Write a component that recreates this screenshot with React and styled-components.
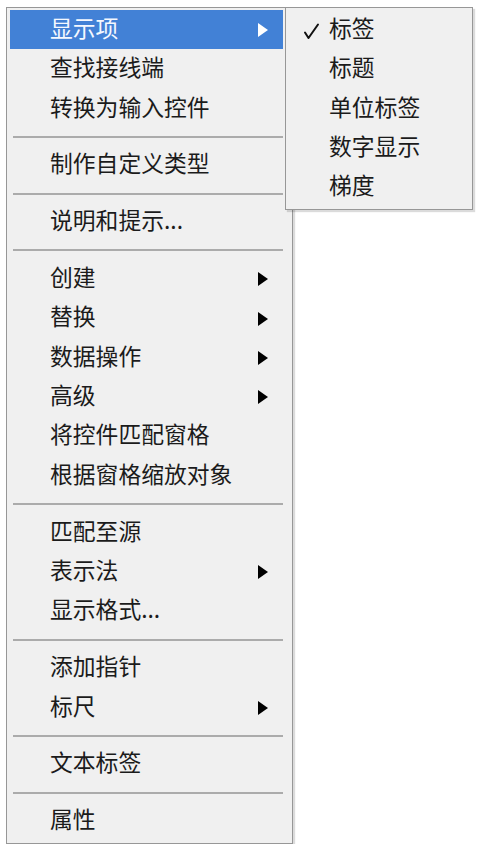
import React from 'react';
import styled, { createGlobalStyle } from 'styled-components';

const GlobalStyle = createGlobalStyle`
  html, body {
    margin: 0;
    padding: 0;
    background: #ffffff;
  }
  body {
    font-family: "Noto Sans CJK SC", "Noto Sans", sans-serif;
  }
`;

const Stage = styled.div`
  position: relative;
  padding: 7px 0 0 6px;
`;

const Menu = styled.div`
  box-sizing: border-box;
  width: ${(p) => p.$width}px;
  background: #f0f0f0;
  border: 1px solid #979797;
  box-shadow: 2px 2px 1px rgba(0, 0, 0, 0.14);
  padding: 2px 9px 2px 3px;
  display: flex;
  flex-direction: column;
`;

const SubMenu = styled(Menu)`
  position: absolute;
  top: 7px;
  left: 285px;
  padding: 2px 4px 2px 3px;
`;

const Item = styled.div`
  height: 39.4px;
  display: flex;
  align-items: center;
  padding: 0 15px 3px 40px;
  box-sizing: border-box;
  position: relative;
  font-size: 22.8px;
  color: ${(p) => (p.$active ? '#f4f8ff' : '#1b1b1b')};
  background: ${(p) => (p.$active ? '#4281d6' : 'transparent')};
  white-space: nowrap;
`;

const Label = styled.span`
  flex: 1;
  line-height: 1;
`;

const Arrow = styled.span`
  width: 0;
  height: 0;
  margin-top: 4px;
  border-top: 7.5px solid transparent;
  border-bottom: 7.5px solid transparent;
  border-left: 10px solid ${(p) => (p.$active ? '#ffffff' : '#000000')};
`;

const Check = styled.svg`
  position: absolute;
  left: 13px;
  top: 12px;
`;

const Separator = styled.div`
  height: 17.4px;
  display: flex;
  align-items: center;
  padding: 0 0 0 3px;

  &::after {
    content: '';
    flex: 1;
    height: 2px;
    background: #ababab;
  }
`;

const mainItems = [
  { label: '显示项', sub: true, active: true },
  { label: '查找接线端' },
  { label: '转换为输入控件' },
  'sep',
  { label: '制作自定义类型' },
  'sep',
  { label: '说明和提示...' },
  'sep',
  { label: '创建', sub: true },
  { label: '替换', sub: true },
  { label: '数据操作', sub: true },
  { label: '高级', sub: true },
  { label: '将控件匹配窗格' },
  { label: '根据窗格缩放对象' },
  'sep',
  { label: '匹配至源' },
  { label: '表示法', sub: true },
  { label: '显示格式...' },
  'sep',
  { label: '添加指针' },
  { label: '标尺', sub: true },
  'sep',
  { label: '文本标签' },
  'sep',
  { label: '属性' },
];

const subItems = [
  { label: '标签', checked: true },
  { label: '标题' },
  { label: '单位标签' },
  { label: '数字显示' },
  { label: '梯度' },
];

const CheckMark = () => (
  <Check width="18" height="18" viewBox="0 0 18 18">
    <path
      d="M3 10.5 L6.5 16 L16 2.5"
      fill="none"
      stroke="#111"
      strokeWidth="2"
      strokeLinecap="round"
      strokeLinejoin="round"
    />
  </Check>
);

export default function App() {
  return (
    <>
      <GlobalStyle />
      <Stage>
        <Menu $width={287}>
          {mainItems.map((it, i) =>
            it === 'sep' ? (
              <Separator key={i} />
            ) : (
              <Item key={i} $active={it.active}>
                <Label>{it.label}</Label>
                {it.sub && <Arrow $active={it.active} />}
              </Item>
            )
          )}
        </Menu>
        <SubMenu $width={188}>
          {subItems.map((it, i) => (
            <Item key={i}>
              {it.checked && <CheckMark />}
              <Label>{it.label}</Label>
            </Item>
          ))}
        </SubMenu>
      </Stage>
    </>
  );
}
